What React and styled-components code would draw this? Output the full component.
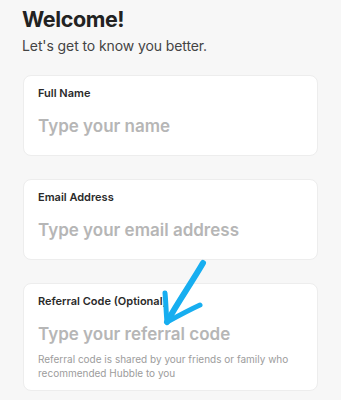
import React from 'react';
import styled, { createGlobalStyle } from 'styled-components';

const GlobalStyle = createGlobalStyle`
  * { box-sizing: border-box; }
  html, body {
    margin: 0;
    padding: 0;
    background: #f7f7f7;
    font-family: Inter, "Noto Sans", sans-serif;
  }
`;

const Page = styled.div`
  position: relative;
  width: 341px;
  height: 400px;
  overflow: hidden;
  padding: 6px 23px 0 22px;
`;

const Title = styled.h1`
  margin: 0;
  font-size: 21.5px;
  line-height: 26px;
  font-weight: 700;
  color: #222;
  letter-spacing: -0.4px;
`;

const Subtitle = styled.p`
  margin: 2px 0 0;
  font-size: 14px;
  line-height: 23px;
  color: #444;
  letter-spacing: -0.1px;
`;

const Fields = styled.div`
  display: flex;
  flex-direction: column;
  gap: 23px;
  margin-top: 18px;
  margin-left: 1px;
`;

const Card = styled.div`
  background: #fff;
  border: 1px solid #ededed;
  border-radius: 8px;
  padding: 11px 14px 11px;
`;

const Label = styled.label`
  display: block;
  font-size: 11px;
  line-height: 13px;
  font-weight: 600;
  color: #2a2a2a;
  margin-bottom: 14px;
`;

const Input = styled.input`
  display: block;
  width: 100%;
  height: 24px;
  border: none;
  outline: none;
  padding: 0;
  margin: 0 0 6px;
  background: transparent;
  font-family: inherit;
  font-size: 17px;
  font-weight: 600;
  color: #222;

  &::placeholder {
    color: #b6b6b6;
  }
`;

const Helper = styled.p`
  margin: 3px 0 -1px;
  font-size: 10px;
  line-height: 14px;
  color: #9c9c9c;
`;

const Arrow = styled.svg`
  position: absolute;
  left: 0;
  top: 0;
  pointer-events: none;
`;

function Field({ label, placeholder, helper }) {
  return (
    <Card>
      <Label>{label}</Label>
      <Input placeholder={placeholder} />
      {helper && <Helper>{helper}</Helper>}
    </Card>
  );
}

export default function App() {
  return (
    <Page>
      <GlobalStyle />
      <Title>Welcome!</Title>
      <Subtitle>Let's get to know you better.</Subtitle>
      <Fields>
        <Field label="Full Name" placeholder="Type your name" />
        <Field label="Email Address" placeholder="Type your email address" />
        <Field
          label="Referral Code (Optional)"
          placeholder="Type your referral code"
          helper="Referral code is shared by your friends or family who recommended Hubble to you"
        />
      </Fields>
      <Arrow width="341" height="400" viewBox="0 0 341 400">
        <path
          d="M203 263 C192 282 178 302 167 322"
          fill="none"
          stroke="#17aef0"
          strokeWidth="6"
          strokeLinecap="round"
        />
        <path
          d="M165 293 C166 303 166 312 167 322 C178 316 189 310 200 305"
          fill="none"
          stroke="#17aef0"
          strokeWidth="5"
          strokeLinecap="round"
          strokeLinejoin="round"
        />
      </Arrow>
    </Page>
  );
}
